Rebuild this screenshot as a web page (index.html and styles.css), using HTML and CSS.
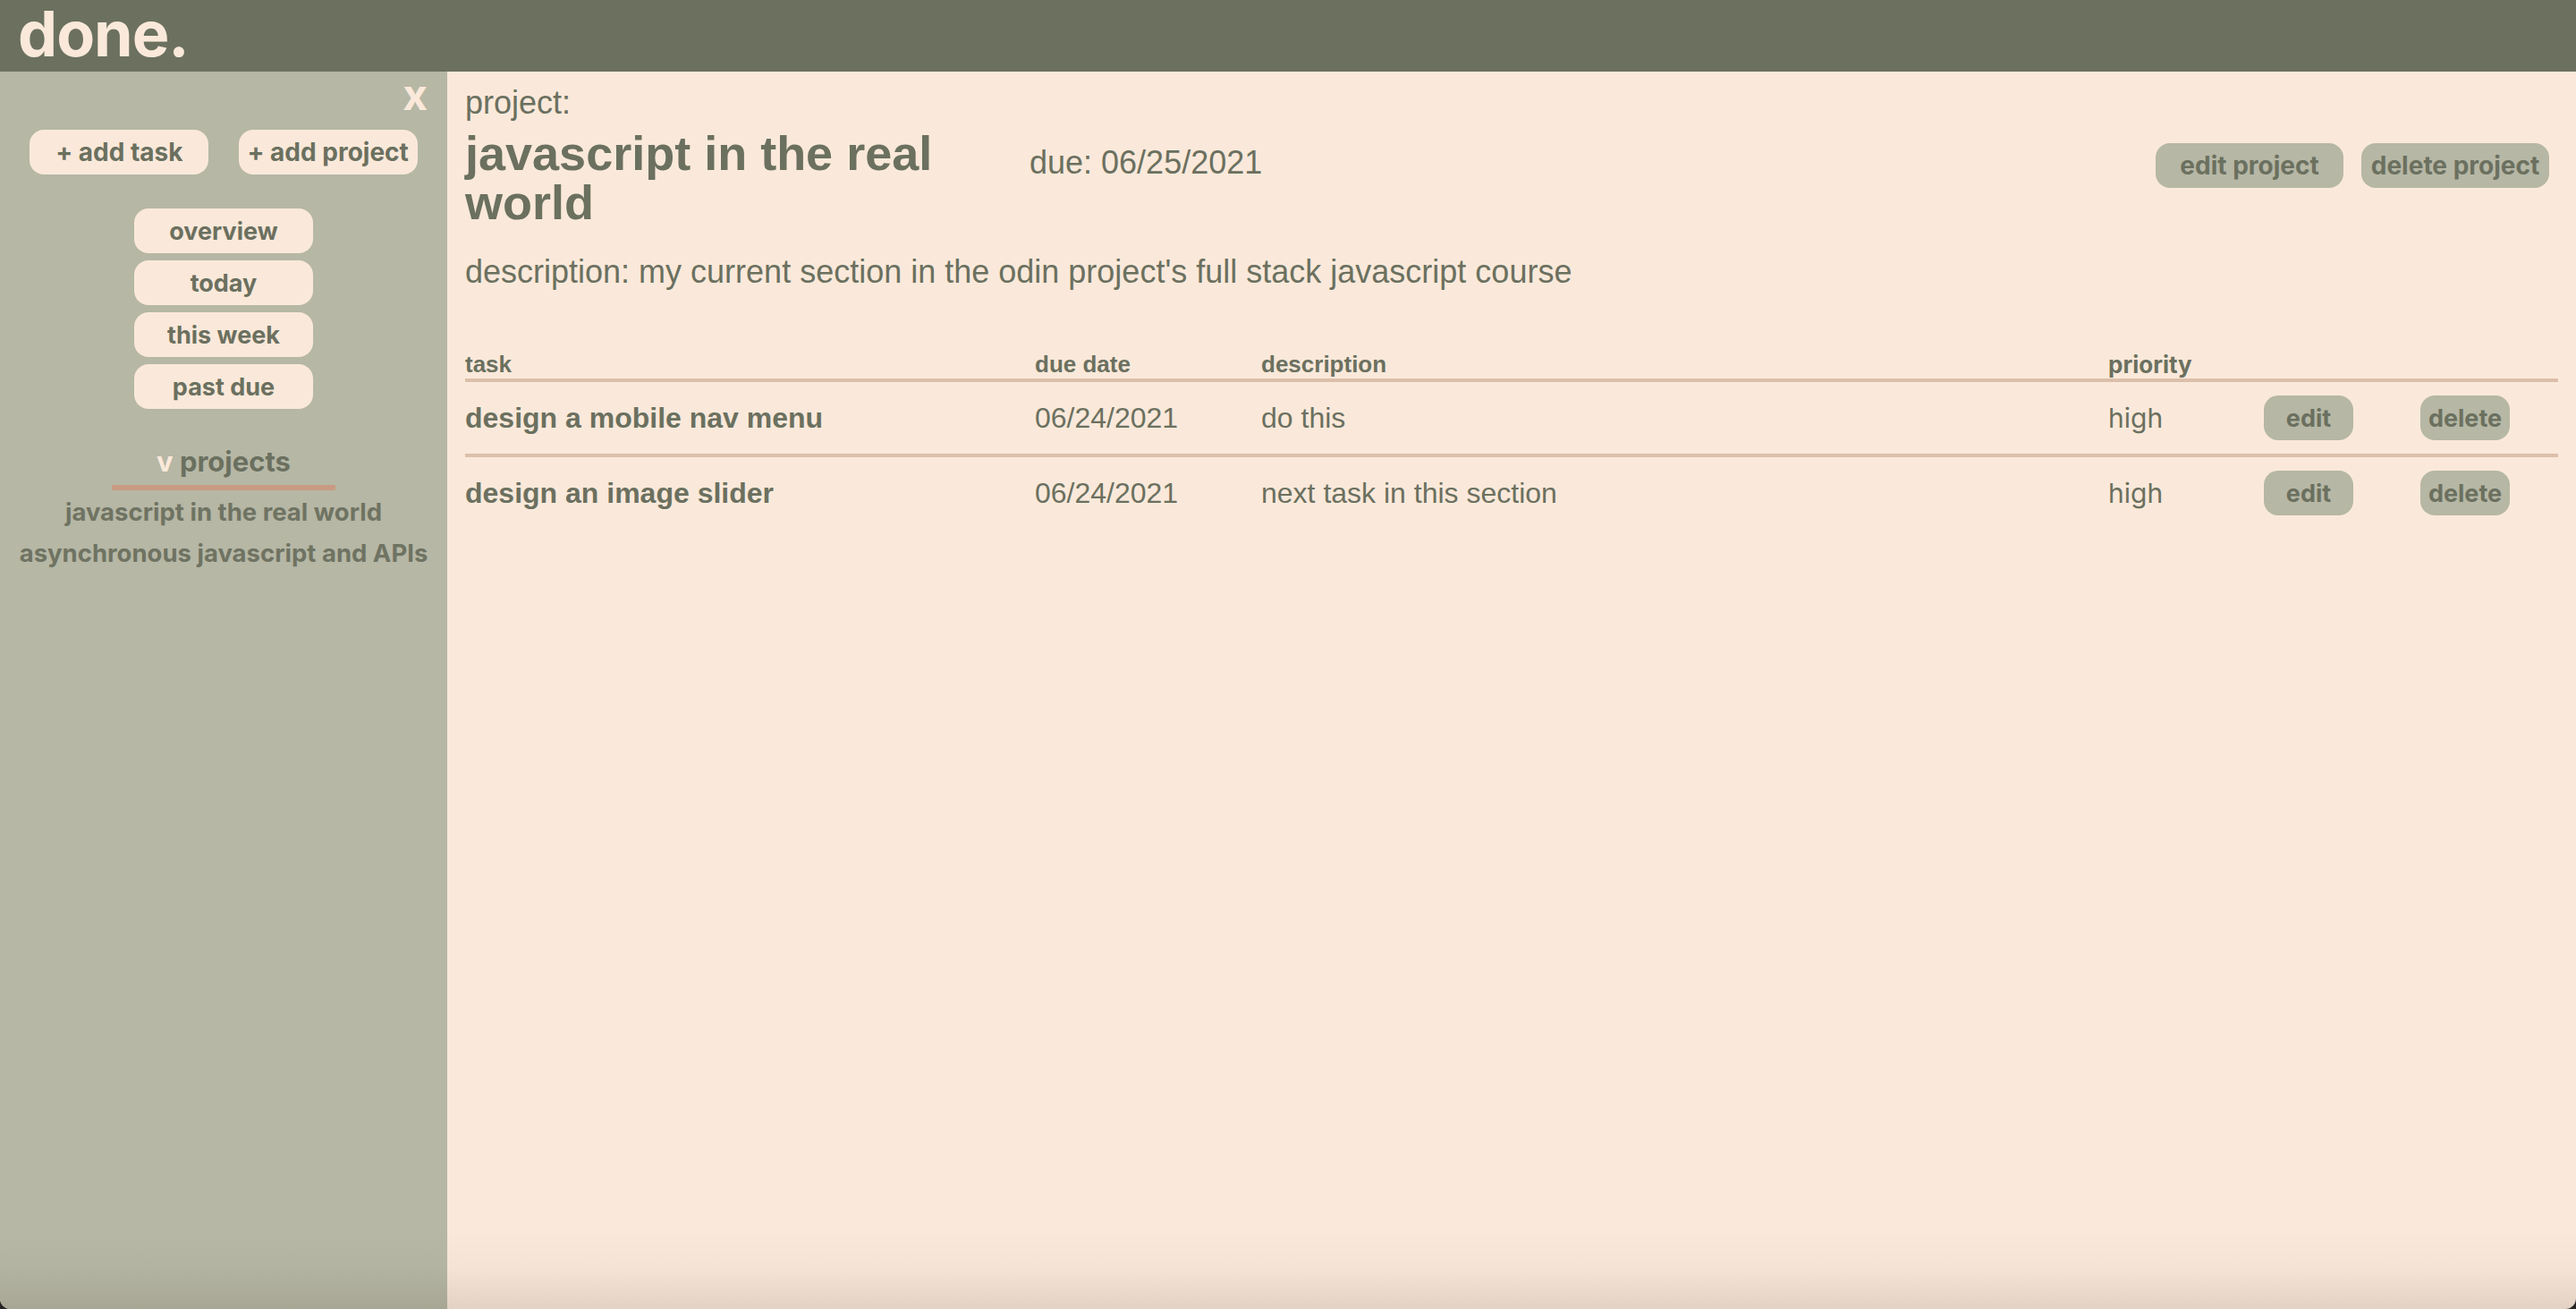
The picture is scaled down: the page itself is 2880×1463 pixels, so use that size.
FILE: index.html
```html
<!DOCTYPE html>
<html lang="en">
<head>
<meta charset="utf-8">
<title>done.</title>
<link rel="stylesheet" href="styles.css">
</head>
<body>
<div class="app">
  <header class="topbar"><h1 class="logo">done.</h1></header>
  <aside class="sidebar">
    <div class="close-row"><button class="close">x</button></div>
    <div class="actions">
      <button class="pill">+ add task</button>
      <button class="pill">+ add project</button>
    </div>
    <nav class="nav">
      <button class="pill nav-pill">overview</button>
      <button class="pill nav-pill">today</button>
      <button class="pill nav-pill">this week</button>
      <button class="pill nav-pill">past due</button>
    </nav>
    <div class="projects">
      <h2 class="projects-heading"><span class="caret">v</span> projects</h2>
      <ul class="project-list">
        <li>javascript in the real world</li>
        <li>asynchronous javascript and APIs</li>
      </ul>
    </div>
  </aside>
  <main class="main">
    <div class="label">project:</div>
    <div class="project-head">
      <h2 class="title">javascript in the real world</h2>
      <div class="due">due: 06/25/2021</div>
      <div class="head-actions">
        <button class="btn btn-wide">edit project</button>
        <button class="btn btn-wide">delete project</button>
      </div>
    </div>
    <p class="desc">description: my current section in the odin project's full stack javascript course</p>
    <div class="tasks">
      <div class="row head">
        <div class="cell">task</div>
        <div class="cell">due date</div>
        <div class="cell">description</div>
        <div class="cell prio-head">priority</div>
        <div class="cell"></div>
        <div class="cell"></div>
      </div>
      <div class="row">
        <div class="cell name">design a mobile nav menu</div>
        <div class="cell">06/24/2021</div>
        <div class="cell">do this</div>
        <div class="cell prio">high</div>
        <div class="cell"><button class="btn btn-small">edit</button></div>
        <div class="cell"><button class="btn btn-small">delete</button></div>
      </div>
      <div class="row last">
        <div class="cell name">design an image slider</div>
        <div class="cell">06/24/2021</div>
        <div class="cell">next task in this section</div>
        <div class="cell prio">high</div>
        <div class="cell"><button class="btn btn-small">edit</button></div>
        <div class="cell"><button class="btn btn-small">delete</button></div>
      </div>
    </div>
  </main>
  <div class="shade"></div>
</div>
</body>
</html>
```

FILE: styles.css
```css
* { box-sizing: border-box; }

html, body {
  margin: 0;
  padding: 0;
  background: #262626;
}

.app {
  position: relative;
  height: 100vh;
  display: grid;
  grid-template-columns: 500px 1fr;
  grid-template-rows: 80px 1fr;
  border-radius: 0 0 12px 12px;
  overflow: hidden;
  background: #fae9da;
}

.topbar {
  grid-column: 1 / 3;
  background: #6b705f;
  padding: 3px 0 0 20px;
}

.logo {
  margin: 0;
  font-family: Inter, "Liberation Sans", sans-serif;
  font-weight: 700;
  font-size: 70px;
  line-height: 70px;
  letter-spacing: -1px;
  color: #fae9da;
}

.sidebar {
  background: #b6b7a5;
  display: flex;
  flex-direction: column;
  font-family: Inter, "Liberation Sans", sans-serif;
  color: #6b705f;
}

.close-row {
  display: flex;
  justify-content: flex-end;
  padding: 2px 22px 0 0;
}

.close {
  background: none;
  border: 0;
  padding: 0;
  font-family: Inter, "Liberation Sans", sans-serif;
  font-weight: 700;
  font-size: 48px;
  line-height: 48px;
  color: #fae9da;
}

.pill {
  width: 200px;
  height: 50px;
  border: 0;
  border-radius: 16px;
  background: #fae9da;
  color: #6b705f;
  font-family: Inter, "Liberation Sans", sans-serif;
  font-weight: 700;
  font-size: 28px;
  padding: 0;
}

.nav-pill { font-size: 27px; }

.actions {
  margin-top: 15px;
  display: flex;
  justify-content: space-evenly;
}

.nav {
  margin-top: 38px;
  display: flex;
  flex-direction: column;
  align-items: center;
  gap: 8px;
}

.projects {
  margin-top: 40px;
  display: flex;
  flex-direction: column;
  align-items: center;
}

.projects-heading {
  margin: 0;
  width: 250px;
  text-align: center;
  font-size: 31px;
  font-weight: 700;
  line-height: 37px;
  padding-bottom: 8px;
  border-bottom: 6px solid #c99b82;
  color: #6b705f;
}

.caret { color: #fae9da; }

.project-list {
  list-style: none;
  margin: 1px 0 0;
  padding: 0;
  text-align: center;
}

.project-list li {
  font-size: 27.5px;
  font-weight: 700;
  line-height: 46px;
  color: #6f7362;
}

.main {
  padding: 14px 20px 0 20px;
  font-family: "Liberation Sans", Arial, sans-serif;
  color: #6b705f;
  min-width: 0;
}

.label {
  font-size: 36px;
}

.project-head {
  margin-top: 8px;
  display: flex;
  align-items: flex-start;
}

.title {
  margin: 0;
  width: 600px;
  font-size: 54px;
  line-height: 55px;
  font-weight: 700;
}

.due {
  margin: 17px 0 0 31px;
  font-size: 36px;
}

.head-actions {
  margin: 16px 10px 0 auto;
  display: flex;
  gap: 20px;
}

.btn {
  border: 0;
  height: 50px;
  border-radius: 16px;
  background: #b6b7a5;
  color: #6b705f;
  font-family: Inter, "Liberation Sans", sans-serif;
  font-weight: 700;
  font-size: 28px;
  padding: 0;
}

.btn-wide { width: 210px; }
.btn-small { width: 100px; font-size: 27px; }

.desc {
  margin: 29px 0 0;
  font-size: 36px;
}

.tasks {
  margin-top: 67px;
}

.row {
  display: grid;
  grid-template-columns: 637px 253px 947px 174px 175px 1fr;
  align-items: center;
  height: 84px;
  border-bottom: 4px solid #dcbfab;
  font-size: 32px;
}

.row.last { border-bottom: 0; height: 80px; }

.row.head {
  height: 35px;
  align-items: start;
  font-size: 26px;
  font-weight: 700;
}

.cell { white-space: nowrap; }

.name { font-weight: 700; }

.prio-head {
  font-family: Inter, "Liberation Sans", sans-serif;
}

.prio {
  font-family: Inter, "Liberation Sans", sans-serif;
  font-size: 30px;
}

.shade {
  position: absolute;
  left: 0;
  right: 0;
  bottom: 0;
  height: 90px;
  pointer-events: none;
  background: linear-gradient(to bottom, rgba(80, 60, 40, 0) 0%, rgba(80, 60, 40, 0.03) 50%, rgba(60, 45, 30, 0.12) 100%);
}
```
